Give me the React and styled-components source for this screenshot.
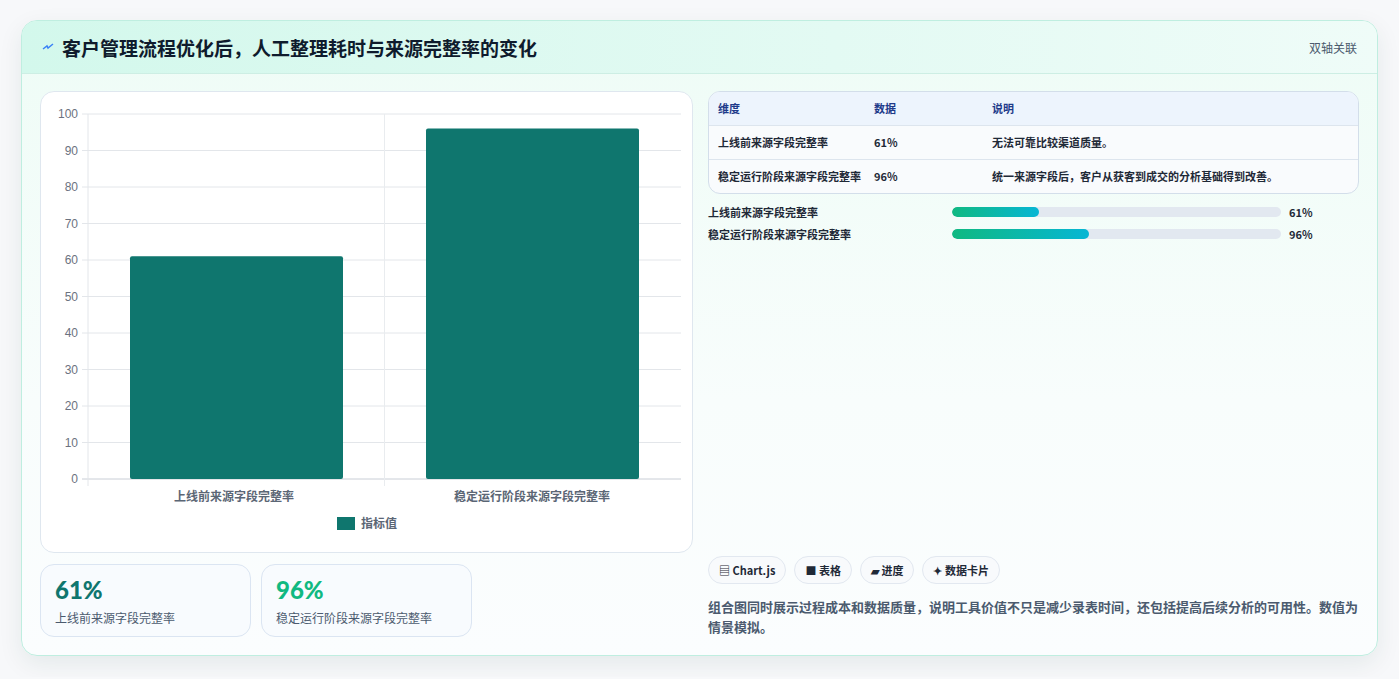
import React from "react";
import styled, { createGlobalStyle } from "styled-components";

const GlobalStyle = createGlobalStyle`
  body {
    margin: 0;
    background: #f7f8fa;
    font-family: "Noto Sans CJK SC", "Noto Sans", sans-serif;
  }
`;

const Page = styled.div`
  padding: 20px 21px 21px 21px;
`;

const Card = styled.div`
  height: 636px;
  box-sizing: border-box;
  border: 1px solid #bfeee0;
  border-radius: 16px;
  background: linear-gradient(180deg, #eefcf6 0%, #f8fdfc 60%, #fbfdfe 100%);
  box-shadow: 0 8px 24px rgba(15, 60, 50, 0.08);
  overflow: hidden;
  display: flex;
  flex-direction: column;
`;

const Header = styled.div`
  height: 55px;
  box-sizing: border-box;
  display: flex;
  align-items: center;
  justify-content: space-between;
  padding: 0 20px;
  background: linear-gradient(90deg, #d3f8ec 0%, #e3faf3 60%, #effcf8 100%);
  border-bottom: 1px solid #cdeee4;
`;

const Title = styled.h1`
  margin: 0;
  font-size: 19px;
  font-weight: 700;
  color: #0f1b2d;
  display: flex;
  align-items: center;
  gap: 8px;
`;

const Tag = styled.span`
  font-size: 12px;
  color: #4b5a6e;
`;

const Body = styled.div`
  flex: 1;
  display: grid;
  grid-template-columns: 653px 1fr;
  gap: 15px;
  padding: 17px 18px 18px 18px;
`;

const Left = styled.div`
  display: flex;
  flex-direction: column;
  gap: 11px;
`;

const ChartBox = styled.div`
  height: 462px;
  box-sizing: border-box;
  background: #fff;
  border: 1px solid #dfe7ef;
  border-radius: 14px;
`;

const Stats = styled.div`
  display: flex;
  gap: 10px;
`;

const Stat = styled.div`
  width: 211px;
  height: 73px;
  box-sizing: border-box;
  padding: 10px 14px;
  border: 1px solid #dbe5f2;
  border-radius: 14px;
  background: #f8fbfe;
`;

const StatValue = styled.div`
  font-family: "Lato", "Noto Sans", sans-serif;
  font-size: 24px;
  font-weight: 900;
  line-height: 30px;
  color: ${(p) => p.$color};
`;

const StatLabel = styled.div`
  font-size: 12px;
  color: #4b5a6e;
  margin-top: 4px;
`;

const Right = styled.div`
  display: flex;
  flex-direction: column;
`;

const Table = styled.div`
  border: 1px solid #d3deea;
  border-radius: 12px;
  overflow: hidden;
  background: #f9fbfd;
`;

const Row = styled.div`
  display: grid;
  grid-template-columns: 156px 118px 1fr;
  padding: 8px 9px;
  font-size: 11px;
  line-height: 17px;
  color: ${(p) => (p.$head ? "#1e3a8a" : "#1f2937")};
  font-weight: 600;
  background: ${(p) => (p.$head ? "#edf4fd" : "transparent")};
  border-bottom: ${(p) => (p.$last ? "none" : "1px solid #dde5ee")};
`;

const Bars = styled.div`
  display: flex;
  flex-direction: column;
  gap: 6px;
  margin-top: 10px;
`;

const BarRow = styled.div`
  display: grid;
  grid-template-columns: 244px 337px 1fr;
  align-items: center;
  gap: 0 0;
  font-size: 11px;
  font-weight: 600;
  color: #1f2937;
`;

const Track = styled.div`
  height: 10px;
  border-radius: 5px;
  background: #e2e8f0;
  margin-right: 8px;
  overflow: hidden;
`;

const Fill = styled.div`
  height: 100%;
  border-radius: 5px;
  background: linear-gradient(90deg, #10b981, #06b6d4);
`;

const Spacer = styled.div`
  flex: 1;
`;

const Chips = styled.div`
  display: flex;
  gap: 8px;
`;

const Chip = styled.span`
  height: 28px;
  box-sizing: border-box;
  padding: 0 10px;
  display: inline-flex;
  align-items: center;
  gap: 4px;
  border: 1px solid #e2e8f0;
  border-radius: 14px;
  background: #f8fafc;
  font-size: 11px;
  font-weight: 700;
  color: #1f2937;
`;

const Note = styled.p`
  margin: 13px 0 0 0;
  font-size: 13px;
  line-height: 20px;
  font-weight: 600;
  color: #4b5a6e;
`;

const ticks = [100, 90, 80, 70, 60, 50, 40, 30, 20, 10, 0];

function Chart() {
  const top = 22, bottom = 387, left = 47, right = 640;
  const y = (v) => bottom - ((bottom - top) * v) / 100;
  const mid = (left + right) / 2;
  const bars = [
    { v: 61, x: 89, label: "上线前来源字段完整率", cx: 193 },
    { v: 96, x: 385, label: "稳定运行阶段来源字段完整率", cx: 491 },
  ];
  return (
    <svg width="651" height="460" fontFamily="Liberation Sans, Noto Sans CJK SC, sans-serif">
      {ticks.map((t) => (
        <g key={t}>
          <line x1={left - 6} x2={right} y1={y(t)} y2={y(t)} stroke={t === 0 ? "#c9ced6" : "#e3e6ea"} />
          <text x={left - 10} y={y(t) + 4} textAnchor="end" fontSize="12" fill="#6b7280">{t}</text>
        </g>
      ))}
      <line x1={left} x2={left} y1={top} y2={bottom + 7} stroke="#e3e6ea" />
      <line x1={mid} x2={mid} y1={top} y2={bottom + 7} stroke="#e9ecef" />
      {bars.map((b) => (
        <g key={b.label}>
          <rect x={b.x} y={y(b.v)} width="213" height={bottom - y(b.v)} rx="2" fill="#0f766e" />
          <text x={b.cx} y={bottom + 22} textAnchor="middle" fontSize="12" fontWeight="600" fill="#5b6675">{b.label}</text>
        </g>
      ))}
      <rect x="296" y="425" width="18" height="13" fill="#0f766e" />
      <text x="320" y="436" fontSize="12" fontWeight="600" fill="#5b6675">指标值</text>
    </svg>
  );
}

export default function App() {
  return (
    <>
      <GlobalStyle />
      <Page>
        <Card>
          <Header>
            <Title>
              <svg width="12" height="12" viewBox="0 0 12 12">
                <path d="M1 8 L5 5 L6 7 L11 3" stroke="#3b82f6" strokeWidth="1.5" fill="none" />
              </svg>
              客户管理流程优化后，人工整理耗时与来源完整率的变化
            </Title>
            <Tag>双轴关联</Tag>
          </Header>
          <Body>
            <Left>
              <ChartBox>
                <Chart />
              </ChartBox>
              <Stats>
                <Stat>
                  <StatValue $color="#0f766e">61%</StatValue>
                  <StatLabel>上线前来源字段完整率</StatLabel>
                </Stat>
                <Stat>
                  <StatValue $color="#10b981">96%</StatValue>
                  <StatLabel>稳定运行阶段来源字段完整率</StatLabel>
                </Stat>
              </Stats>
            </Left>
            <Right>
              <Table>
                <Row $head>
                  <span>维度</span><span>数据</span><span>说明</span>
                </Row>
                <Row>
                  <span>上线前来源字段完整率</span><span>61%</span><span>无法可靠比较渠道质量。</span>
                </Row>
                <Row $last>
                  <span>稳定运行阶段来源字段完整率</span><span>96%</span><span>统一来源字段后，客户从获客到成交的分析基础得到改善。</span>
                </Row>
              </Table>
              <Bars>
                <BarRow>
                  <span>上线前来源字段完整率</span>
                  <Track><Fill style={{ width: "26.5%" }} /></Track>
                  <span>61%</span>
                </BarRow>
                <BarRow>
                  <span>稳定运行阶段来源字段完整率</span>
                  <Track><Fill style={{ width: "41.7%" }} /></Track>
                  <span>96%</span>
                </BarRow>
              </Bars>
              <Spacer />
              <Chips>
                <Chip>▤ Chart.js</Chip>
                <Chip>■ 表格</Chip>
                <Chip>▰ 进度</Chip>
                <Chip>✦ 数据卡片</Chip>
              </Chips>
              <Note>组合图同时展示过程成本和数据质量，说明工具价值不只是减少录表时间，还包括提高后续分析的可用性。数值为情景模拟。</Note>
            </Right>
          </Body>
        </Card>
      </Page>
    </>
  );
}
